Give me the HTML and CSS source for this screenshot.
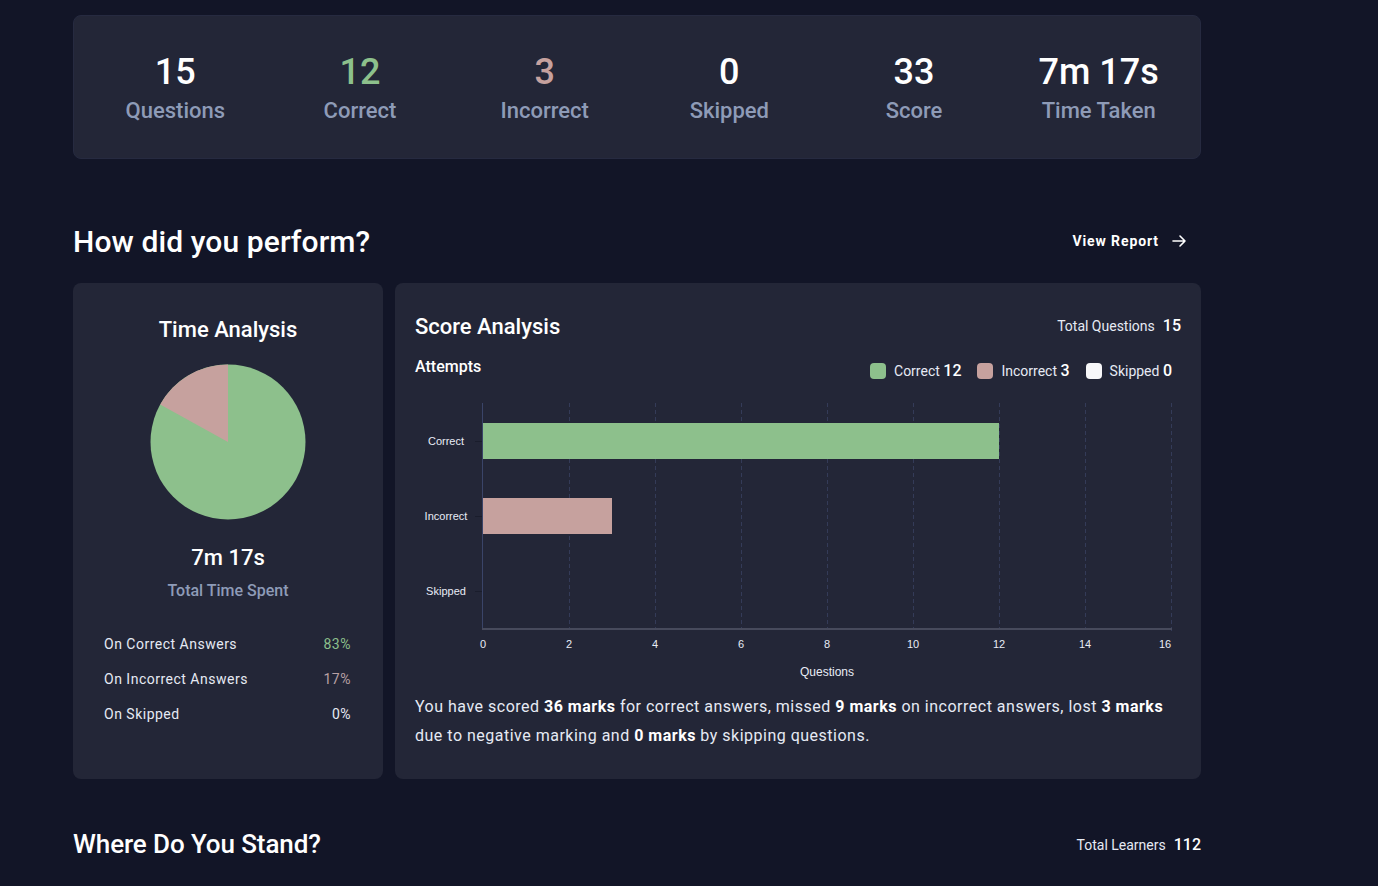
FILE: index.html
```html
<!DOCTYPE html>
<html lang="en">
<head>
<meta charset="utf-8">
<title>Result</title>
<link rel="stylesheet" href="styles.css">
</head>
<body>
<main class="page">
  <section class="stats card">
    <div class="stat"><div class="stat-num">15</div><div class="stat-label">Questions</div></div>
    <div class="stat"><div class="stat-num green">12</div><div class="stat-label">Correct</div></div>
    <div class="stat"><div class="stat-num pink">3</div><div class="stat-label">Incorrect</div></div>
    <div class="stat"><div class="stat-num">0</div><div class="stat-label">Skipped</div></div>
    <div class="stat"><div class="stat-num">33</div><div class="stat-label">Score</div></div>
    <div class="stat"><div class="stat-num">7m 17s</div><div class="stat-label">Time Taken</div></div>
  </section>

  <header class="section-head perform-head">
    <h2 class="section-title">How did you perform?</h2>
    <a class="view-report" href="#">View Report
      <svg class="arrow" viewBox="0 0 16 16" width="16" height="16" fill="none" stroke="#fff" stroke-width="1.6" stroke-linecap="round" stroke-linejoin="round"><path d="M2 8h12M9 3l5 5-5 5"/></svg>
    </a>
  </header>

  <section class="analysis">
    <div class="card time-card">
      <h3 class="card-title">Time Analysis</h3>
      <svg class="pie" viewBox="0 0 156 156" width="156" height="156">
        <circle cx="78" cy="78" r="77.5" fill="#8dc08c"/>
        <path d="M78 78 L78 0.5 A77.5 77.5 0 0 0 10.2 40.5 Z" fill="#c6a19e"/>
      </svg>
      <div class="time-total">7m 17s</div>
      <div class="time-sub">Total Time Spent</div>
      <ul class="time-rows">
        <li class="time-row"><span>On Correct Answers</span><span class="green">83%</span></li>
        <li class="time-row"><span>On Incorrect Answers</span><span class="pink-dim">17%</span></li>
        <li class="time-row"><span>On Skipped</span><span>0%</span></li>
      </ul>
    </div>

    <div class="card score-card">
      <div class="score-head">
        <h3 class="card-title">Score Analysis</h3>
        <div class="total"><span class="total-label">Total Questions</span><span class="total-val">15</span></div>
      </div>
      <div class="attempts-row">
        <div class="attempts">Attempts</div>
        <div class="legend">
          <span class="legend-item"><i class="sw sw-green"></i>Correct <b>12</b></span>
          <span class="legend-item"><i class="sw sw-pink"></i>Incorrect <b>3</b></span>
          <span class="legend-item"><i class="sw sw-white"></i>Skipped <b>0</b></span>
        </div>
      </div>
      <svg class="chart" viewBox="0 0 766 306" width="766" height="306">
        <g stroke="#343b58" stroke-width="1" stroke-dasharray="4 3">
          <line x1="154.5" y1="19" x2="154.5" y2="245"/>
          <line x1="240.5" y1="19" x2="240.5" y2="245"/>
          <line x1="326.5" y1="19" x2="326.5" y2="245"/>
          <line x1="412.5" y1="19" x2="412.5" y2="245"/>
          <line x1="498.5" y1="19" x2="498.5" y2="245"/>
          <line x1="584.5" y1="19" x2="584.5" y2="245"/>
          <line x1="670.5" y1="19" x2="670.5" y2="245"/>
          <line x1="756.5" y1="19" x2="756.5" y2="250"/>
        </g>
        <g stroke="#1a1d2c" stroke-width="1">
          <line x1="60" y1="57.5" x2="67" y2="57.5"/>
          <line x1="60" y1="132.5" x2="67" y2="132.5"/>
          <line x1="60" y1="207.5" x2="67" y2="207.5"/>
        </g>
        <rect x="68" y="39" width="516" height="36" fill="#8dc08c"/>
        <rect x="68" y="114" width="129" height="36" fill="#c6a19e"/>
        <line x1="67.5" y1="19" x2="67.5" y2="246" stroke="#3a4468" stroke-width="1"/>
        <line x1="67" y1="245" x2="757" y2="245" stroke="#474a5c" stroke-width="2"/>
        <g class="axis-y" fill="#e8ecf6" font-size="11" text-anchor="middle">
          <text x="31" y="61">Correct</text>
          <text x="31" y="136">Incorrect</text>
          <text x="31" y="211">Skipped</text>
        </g>
        <g class="axis-x" fill="#e8ecf6" font-size="11" text-anchor="middle">
          <text x="68" y="264">0</text>
          <text x="154" y="264">2</text>
          <text x="240" y="264">4</text>
          <text x="326" y="264">6</text>
          <text x="412" y="264">8</text>
          <text x="498" y="264">10</text>
          <text x="584" y="264">12</text>
          <text x="670" y="264">14</text>
          <text x="750" y="264">16</text>
        </g>
        <text class="axis-title" x="412" y="292" fill="#e8ecf6" font-size="12" text-anchor="middle">Questions</text>
      </svg>
      <p class="summary">You have scored <b>36 marks</b> for correct answers, missed <b>9 marks</b> on incorrect answers, lost <b>3 marks</b> due to negative marking and <b>0 marks</b> by skipping questions.</p>
    </div>
  </section>

  <header class="section-head stand-head">
    <h2 class="section-title small">Where Do You Stand?</h2>
    <div class="total"><span class="total-label">Total Learners</span><span class="total-val">112</span></div>
  </header>
</main>
</body>
</html>
```

FILE: styles.css
```css
* { box-sizing: border-box; }
html, body { margin: 0; padding: 0; }
body {
  background: #121527;
  color: #ffffff;
  font-family: Roboto, "Noto Sans", "Liberation Sans", sans-serif;
  height: 886px;
  overflow: hidden;
}
.page {
  width: 1128px;
  margin-left: 73px;
  padding-top: 15px;
}
.card {
  background: #232637;
  border-radius: 8px;
}
.green { color: #8dc08c; }
.pink { color: #c6a19e; }
.pink-dim { color: #b8a0a4; }

/* stats */
.stats {
  display: grid;
  grid-template-columns: repeat(6, 1fr);
  padding: 34px 9px 33px;
  border: 1px solid #262a40;
}
.stat { text-align: center; }
.stat-num {
  font-size: 36px;
  line-height: 44px;
  font-weight: 500;
}
.stat-label {
  font-size: 22px;
  line-height: 28px;
  margin-top: 3px;
  color: #8e9bb7;
  font-weight: 500;
}

/* section heads */
.section-head {
  display: flex;
  align-items: center;
  justify-content: space-between;
  height: 46px;
}
.perform-head { margin-top: 59px; margin-bottom: 19px; }
.stand-head { margin-top: 42px; }
.section-title {
  margin: 0;
  font-size: 30px;
  font-weight: 500;
  letter-spacing: 0.1px;
}
.section-title.small { font-size: 26px; letter-spacing: -0.1px; }
.view-report {
  display: flex;
  align-items: center;
  gap: 12px;
  color: #fff;
  text-decoration: none;
  font-size: 14px;
  font-weight: 700;
  letter-spacing: 0.9px;
  margin-right: 14px;
}

/* analysis */
.analysis {
  display: flex;
  gap: 12px;
  align-items: stretch;
}
.card-title {
  margin: 0;
  font-size: 22px;
  line-height: 30px;
  font-weight: 500;
}
.time-card {
  width: 310px;
  flex: none;
  display: flex;
  flex-direction: column;
  align-items: center;
  padding: 32px 0 0;
}
.pie { margin-top: 19px; display: block; }
.time-total {
  margin-top: 23px;
  font-size: 22px;
  line-height: 30px;
  font-weight: 500;
}
.time-sub {
  margin-top: 7px;
  font-size: 16px;
  line-height: 22px;
  color: #8e9bb7;
  font-weight: 500;
}
.time-rows {
  list-style: none;
  margin: 32px 0 0;
  padding: 0 32px 0 31px;
  align-self: stretch;
}
.time-row {
  display: flex;
  justify-content: space-between;
  font-size: 14px;
  line-height: 20px;
  letter-spacing: 0.5px;
  color: #e6eaf4;
  margin-bottom: 14.8px;
}

.score-card {
  flex: 1;
  padding: 29px 20px 29px;
}
.score-head {
  display: flex;
  justify-content: space-between;
  align-items: center;
  height: 30px;
}
.total { display: flex; align-items: baseline; gap: 8px; }
.total-label { font-size: 14px; color: #e6eaf4; }
.total-val { font-size: 16px; font-weight: 500; }
.score-head .total { margin-top: -4px; }
.attempts-row {
  display: flex;
  justify-content: space-between;
  align-items: center;
  margin-top: 13px;
  height: 29px;
}
.attempts {
  font-size: 16px;
  font-weight: 500;
  align-self: flex-start;
  margin-top: 2px;
}
.legend {
  display: flex;
  gap: 16px;
  margin-right: 9px;
  margin-top: 2px;
}
.legend-item {
  display: flex;
  align-items: center;
  font-size: 14px;
  color: #e6eaf4;
  white-space: pre;
}
.legend-item b { font-size: 16px; font-weight: 500; color: #fff; }
.sw {
  width: 16px;
  height: 16px;
  border-radius: 4px;
  margin-right: 8px;
  display: inline-block;
}
.sw-green { background: #8dc08c; }
.sw-pink { background: #c6a19e; }
.sw-white { background: #f7f7f9; }
.chart {
  display: block;
  font-family: "Liberation Sans", Arial, sans-serif;
}
.summary {
  margin: 2px 0 0;
  font-size: 16px;
  line-height: 29px;
  letter-spacing: 0.5px;
  color: #e6eaf4;
}
.summary b { color: #fff; font-weight: 700; }
```
